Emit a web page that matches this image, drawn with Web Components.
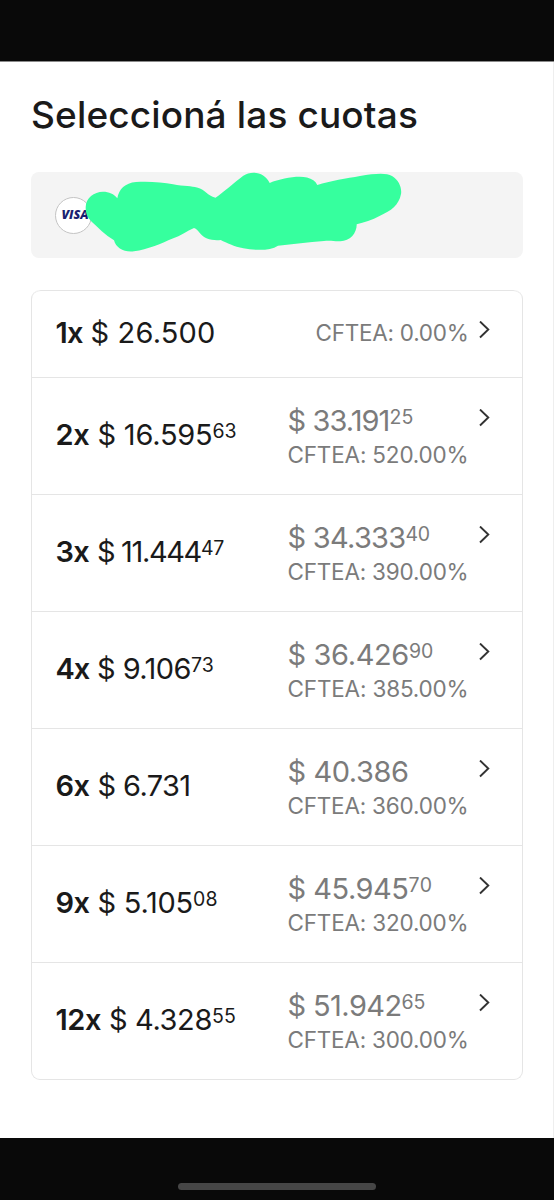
<!DOCTYPE html>
<html lang="es">
<head>
<meta charset="utf-8">
<title>Seleccioná las cuotas</title>
<style>
  body {
    margin: 0;
    background: #090909;
    font-family: Inter, Roboto, sans-serif;
    color: #1a1a1a;
  }
</style>
</head>
<body>
<phone-screen>
  <page-title>Seleccioná las cuotas</page-title>
  <card-summary>VISA</card-summary>
  <installment-list></installment-list>
</phone-screen>

<script>
// Text run with a fixed advance width: tracking absorbs the difference
class FitText extends HTMLElement {
  constructor() {
    super()
    this.attachShadow({mode: 'open'})
    this.shadowRoot.innerHTML = `
    <style>
      :host { display: block; flex: none; }
      span { display: block; width: max-content; white-space: pre; }
    </style>
    <span><slot></slot></span>`
  }

  connectedCallback() {
    const width = Number(this.getAttribute('width'))
    const span = this.shadowRoot.querySelector('span')
    const natural = span.getBoundingClientRect().width
    span.style.letterSpacing = `${(width - natural) / this.textContent.length}px`
    this.style.width = `${width}px`
  }
}

class PhoneScreen extends HTMLElement {
  constructor() {
    super()
    this.attachShadow({mode: 'open'})
    this.shadowRoot.innerHTML = `
    <style>
      :host {
        display: flex;
        flex-direction: column;
        height: 1200px;
        background: #090909;
      }
      .status { height: 62px; flex: none; border-bottom: 1px solid #8a8a8a; box-sizing: border-box; }
      main {
        height: 1076px;
        flex: none;
        box-sizing: border-box;
        padding: 29px 31px 0;
        background: #fff;
        box-shadow: inset -1px 0 #eee;
      }
      .home { flex: 1; display: flex; justify-content: center; align-items: flex-end; padding-bottom: 10px; }
      .home i { width: 198px; height: 7px; border-radius: 4px; background: #464646; }
    </style>
    <div class="status"></div>
    <main><slot></slot></main>
    <div class="home"><i></i></div>`
  }
}

class PageTitle extends HTMLElement {
  constructor() {
    super()
    this.attachShadow({mode: 'open'})
    this.shadowRoot.innerHTML = `
    <style>
      :host { display: block; height: 81px; }
      h1 { margin: 0; font: 500 37px/48px Inter, sans-serif; }
    </style>
    <h1><fit-text width="387">${this.textContent}</fit-text></h1>`
  }
}

class CardSummary extends HTMLElement {
  constructor() {
    super()
    this.attachShadow({mode: 'open'})
    this.shadowRoot.innerHTML = `
    <style>
      :host {
        display: flex;
        align-items: center;
        position: relative;
        height: 86px;
        box-sizing: border-box;
        padding-left: 24px;
        border-radius: 8px;
        background: #f4f4f4;
      }
      .logo {
        display: flex;
        align-items: center;
        justify-content: center;
        width: 37px;
        height: 37px;
        box-sizing: border-box;
        border: 1px solid #c4c4c4;
        border-radius: 50%;
        background: #fff;
        padding-left: 3px;
        color: #1a1f71;
        font: italic 800 12.5px/16px "Open Sans", sans-serif;
      }
      svg { position: absolute; left: 0; top: 0; }
    </style>
    <div class="logo"><fit-text width="27">${this.textContent}</fit-text></div>
    <svg width="492" height="86" viewBox="31 172 492 86">
      <path fill="#36ff9e" d="M85.7 207C86 198 94 191.7 103 191.7C109 191.7 114 194 117.3 198.3C119 189 125 183 136 182C149 181 163 182.5 173 184.3C184 186.5 192 186 197 187.5C206 190 207 195.5 215.5 197.7C224 192 234 182.5 243.3 175.7C252 170 265 172.5 269.7 183C281 178.5 297 175.5 307 177.5C312 179 315.5 181 317.3 185C330 181 347 178.3 360 176C375 173.5 386 172.5 392 176C399 180 402 188 401 194C399 205 391 211 380 215.7C372 220 364 222.5 356.7 224.3C357 233 350 241.5 340 241.3C334 241.5 332 240.5 324 241C308 242 293 244.5 278 245.7C270 251 256 250.5 243.3 248.3C234 246.5 227 243 220.7 240C212 241 204 238.5 200 233.3C198 231 196.5 228.5 194 228C187 231 180 236 173.3 238.3C160 244 148 249.5 134 251.3C124 252.5 116 248 114 240.3C105 235 98 227.5 91.7 221.7C87 217 85.5 213 85.7 207Z"/>
    </svg>`
  }
}

class InstallmentRow extends HTMLElement {
  set plan(p) {
    const money = m => m.map(([text, width], i) =>
      `<fit-text class="${i ? 'cents' : 'amount'}" width="${width}">${text}</fit-text>`).join('')
    this.attachShadow({mode: 'open'})
    this.shadowRoot.innerHTML = `
    <style>
      :host {
        display: grid;
        grid-template-columns: 232px 181px 1fr;
        height: ${p.total ? 117 : 87}px;
        box-sizing: border-box;
        padding-left: 23.5px;
        border-top: 1px solid #e5e5e5;
      }
      .line { display: flex; height: 36px; font: 400 29px/36px Inter, sans-serif; }
      .quota { align-self: center; padding-bottom: 2px; }
      .count { font-weight: 600; margin-right: 8px; }
      .cents { font-size: 19.5px; line-height: 29px; }
      .side { color: #7b7b7b; padding-top: ${p.total ? 25 : 26}px; }
      .rate { font-size: 22.5px; line-height: 32px; margin-left: auto; }
      svg { margin: ${p.total ? 31 : 30}px 0 0 10px; }
    </style>
    <div class="line quota">
      <fit-text class="count" width="${p.countWidth}">${p.count}x</fit-text>${money(p.each)}
    </div>
    <div class="side">
      ${p.total ? `<div class="line">${money(p.total)}</div>` : ''}
      <fit-text class="rate" width="${p.total ? 181 : 153}">CFTEA: ${p.rate}%</fit-text>
    </div>
    <svg width="13" height="18" viewBox="0 0 13 18" fill="none" stroke="#333" stroke-width="1.9">
      <path d="M1 .5L9.300 8.500L1 16.500"/>
    </svg>`
  }
}

class InstallmentList extends HTMLElement {
  constructor() {
    super()
    this.attachShadow({mode: 'open'})
    this.shadowRoot.innerHTML = `
    <style>
      :host {
        display: block;
        margin-top: 32px;
        border: 1px solid #e5e5e5;
        border-top: 0;
        border-radius: 9px;
        overflow: hidden;
      }
      installment-row:first-of-type { border-radius: 9px 9px 0 0; }
    </style>`
  }

  connectedCallback() {
    for (const plan of InstallmentList.plans) {
      const row = document.createElement('installment-row')
      row.plan = plan
      this.shadowRoot.append(row)
    }
  }

  // each text run is paired with its width in px
  static plans = [
    {count: 1, countWidth: 27, each: [['$ 26.500', 125]], rate: '0.00'},
    {count: 2, countWidth: 34, each: [['$ 16.595', 115], ['63', 24]], total: [['$ 33.191', 102], ['25', 24]], rate: '520.00'},
    {count: 3, countWidth: 33.5, each: [['$ 11.444', 104], ['47', 23]], total: [['$ 34.333', 118], ['40', 24]], rate: '390.00'},
    {count: 4, countWidth: 33.5, each: [['$ 9.106', 94], ['73', 23]], total: [['$ 36.426', 121.5], ['90', 24]], rate: '385.00'},
    {count: 6, countWidth: 34, each: [['$ 6.731', 93]], total: [['$ 40.386', 121]], rate: '360.00'},
    {count: 9, countWidth: 34, each: [['$ 5.105', 95.5], ['08', 25]], total: [['$ 45.945', 121], ['70', 24]], rate: '320.00'},
    {count: 12, countWidth: 45.5, each: [['$ 4.328', 103], ['55', 24]], total: [['$ 51.942', 114], ['65', 24]], rate: '300.00'}
  ]
}

customElements.define('fit-text', FitText)
customElements.define('phone-screen', PhoneScreen)
customElements.define('page-title', PageTitle)
customElements.define('card-summary', CardSummary)
customElements.define('installment-row', InstallmentRow)
customElements.define('installment-list', InstallmentList)
</script>
</body>
</html>
